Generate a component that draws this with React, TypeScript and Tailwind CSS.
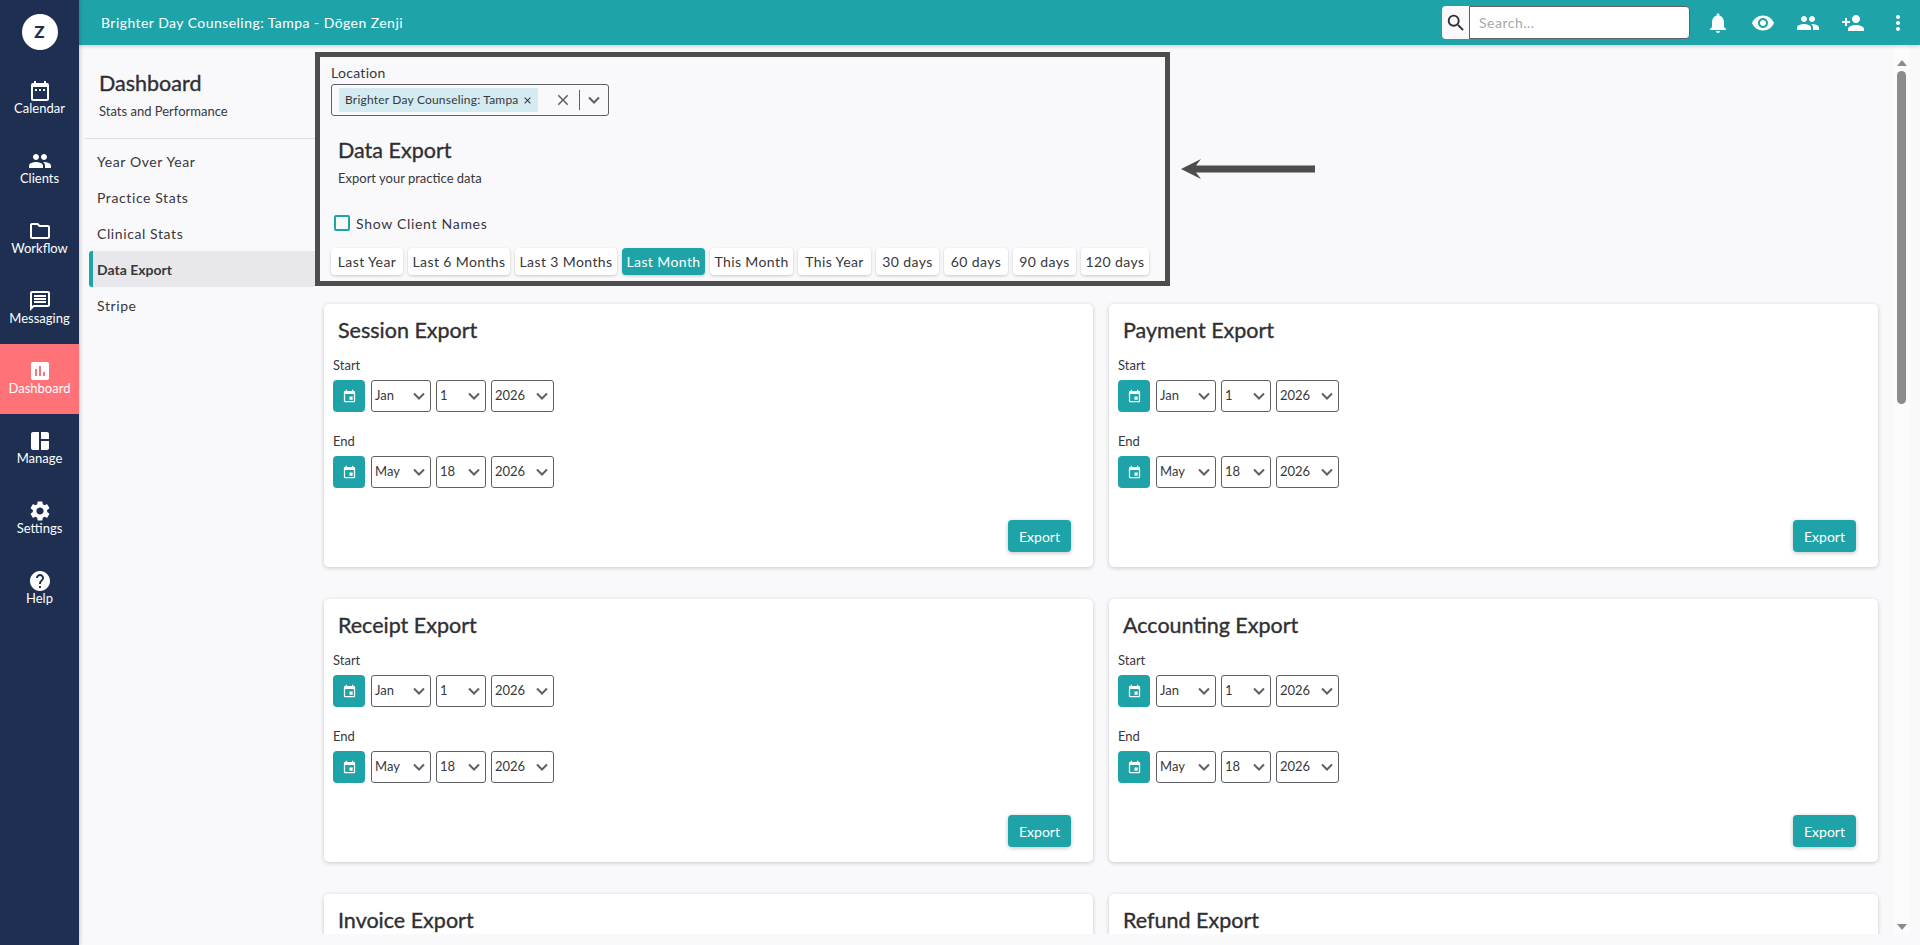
import React from "react";
import {
  MdPeople,
  MdOutlineFolder,
  MdOutlineMessage,
  MdAssessment,
  MdSpaceDashboard,
  MdSettings,
  MdHelp,
  MdNotifications,
  MdVisibility,
  MdPersonAdd,
  MdMoreVert,
  MdSearch,
  MdEvent,
  MdClose,
} from "react-icons/md";

const font = "font-['Lato','Open_Sans',sans-serif]";
const heading = "text-[21.5px] leading-[26px] text-[#2f2f33] [-webkit-text-stroke:0.35px_#2f2f33]";

function CalendarDots() {
  return (
    <svg width="24" height="24" viewBox="0 0 24 24" fill="white">
      <path d="M19 4h-1V2h-2v2H8V2H6v2H5a2 2 0 0 0-2 2v14a2 2 0 0 0 2 2h14a2 2 0 0 0 2-2V6a2 2 0 0 0-2-2zm0 16H5V8h14v12z" />
      <path d="M7 10h2v2H7zM11 10h2v2h-2zM15 10h2v2h-2z" />
    </svg>
  );
}

const sideItems: { label: string; icon: React.ReactNode; active?: boolean }[] = [
  { label: "Calendar", icon: <CalendarDots /> },
  { label: "Clients", icon: <MdPeople size={24} /> },
  { label: "Workflow", icon: <MdOutlineFolder size={24} /> },
  { label: "Messaging", icon: <MdOutlineMessage size={24} /> },
  { label: "Dashboard", icon: <MdAssessment size={24} />, active: true },
  { label: "Manage", icon: <MdSpaceDashboard size={24} /> },
  { label: "Settings", icon: <MdSettings size={24} /> },
  { label: "Help", icon: <MdHelp size={24} /> },
];

function Chevron({ className }: { className: string }) {
  return (
    <svg className={className} width="14" height="14" viewBox="0 0 14 14" fill="none" stroke="#5f5f66" strokeWidth="2">
      <path d="M2 4.5 7 9.5l5-5" />
    </svg>
  );
}

const ranges = [
  { t: "Last Year", w: "w-[72px]" },
  { t: "Last 6 Months", w: "w-[102px]" },
  { t: "Last 3 Months", w: "w-[102px]" },
  { t: "Last Month", w: "w-[83px]", on: true },
  { t: "This Month", w: "w-[83px]" },
  { t: "This Year", w: "w-[73px]" },
  { t: "30 days", w: "w-[63px]" },
  { t: "60 days", w: "w-[64px]" },
  { t: "90 days", w: "w-[63px]" },
  { t: "120 days", w: "w-[68px]" },
];

function DateSelect({ v, w }: { v: string; w: string }) {
  return (
    <div className={`${w} h-[32px] border border-[#5f5f66] rounded-[3px] bg-white flex items-center justify-between pl-[3px] pr-[4px] text-[13px] text-[#37373c]`}>
      <span>{v}</span>
      <Chevron className="shrink-0" />
    </div>
  );
}

function DateRow({ label, m, d, mb }: { label: string; m: string; d: string; mb: string }) {
  return (
    <div className={mb}>
      <div className="text-[13px] leading-[16px] text-[#37373c] mb-[7px]">{label}</div>
      <div className="flex items-center">
        <div className="w-[32px] h-[32px] rounded-[4px] bg-[#1ea4a8] flex items-center justify-center mr-[6px] text-white">
          <MdEvent size={15} />
        </div>
        <div className="flex gap-[5px]">
          <DateSelect v={m} w="w-[60px]" />
          <DateSelect v={d} w="w-[50px]" />
          <DateSelect v="2026" w="w-[63px]" />
        </div>
      </div>
    </div>
  );
}

function Card({ title }: { title: string }) {
  return (
    <div className="h-[263px] bg-white rounded-[5px] shadow-[0_1px_4px_rgba(0,0,0,0.2)] pt-[13px] px-[9px] flex flex-col">
      <h3 className={`pl-[5px] ${heading} mb-[14px]`}>{title}</h3>
      <DateRow label="Start" m="Jan" d="1" mb="mb-[21px]" />
      <DateRow label="End" m="May" d="18" mb="" />
      <div className="mt-[32px] mr-[13px] self-end w-[63px] h-[32px] bg-[#1ea4a8] rounded-[4px] text-white text-[14px] flex items-center justify-center shadow-[0_1px_4px_rgba(0,0,0,0.25)]">
        Export
      </div>
    </div>
  );
}

const topIcons = [MdNotifications, MdVisibility, MdPeople, MdPersonAdd, MdMoreVert];
const navItems = ["Year Over Year", "Practice Stats", "Clinical Stats", "Data Export", "Stripe"];

export default function App() {
  return (
    <div className={`w-[1920px] h-[945px] flex overflow-hidden bg-[#f9f9fb] ${font}`}>
      <aside className="w-[79px] shrink-0 bg-[#1e2f52] text-white flex flex-col shadow-[1px_0_4px_rgba(0,0,0,0.2)] z-20">
        <div className="h-[64px] flex items-center justify-center">
          <div className="w-[36px] h-[36px] rounded-full bg-white flex items-center justify-center text-[#1e2f52] text-[17px] font-black">
            Z
          </div>
        </div>
        {sideItems.map((s) => (
          <div
            key={s.label}
            className={`h-[70px] pb-[3px] flex flex-col items-center justify-center text-[13px] leading-[16px] ${s.active ? "bg-[#ff7378]" : ""}`}
          >
            {s.icon}
            <span className="-mt-[3px]">{s.label}</span>
          </div>
        ))}
      </aside>

      <div className="flex-1 flex flex-col min-w-0">
        <header className="h-[45px] shrink-0 bg-[#1ea4a8] flex items-center justify-between text-white shadow-[0_1px_4px_rgba(0,0,0,0.2)] z-10">
          <div className="pl-[22px] text-[14px] tracking-[0.45px]">Brighter Day Counseling: Tampa - Dōgen Zenji</div>
          <div className="flex items-center">
            <div className="w-[27px] h-[33px] bg-[#f9f9fb] rounded-l-[4px] flex items-center justify-center text-[#2f2f33]">
              <MdSearch size={22} />
            </div>
            <div className="w-[221px] h-[33px] bg-white border border-[#5f5f66] rounded-r-[4px] flex items-center pl-[9px] text-[14px] tracking-[0.5px] text-[#a8a8ac]">
              Search...
            </div>
            <div className="flex ml-[5px]">
              {topIcons.map((I, i) => (
                <div key={i} className="w-[45px] flex justify-center">
                  <I size={24} />
                </div>
              ))}
            </div>
          </div>
        </header>

        <div className="flex-1 flex min-h-0 relative">
          <nav className="w-[236px] shrink-0 pt-[25px]">
            <div className="pl-[20px] h-[69px] ml-[6px] border-b border-[#dcdcde] flex flex-col">
              <h1 className={`-ml-[6px] ${heading}`}>Dashboard</h1>
              <p className="-ml-[6px] mt-[7px] text-[13px] leading-[16px] text-[#37373c]">Stats and Performance</p>
            </div>
            <ul className="mt-[4px] pl-[10px]">
              {navItems.map((n) => {
                const on = n === "Data Export";
                return (
                  <li
                    key={n}
                    className={`h-[36px] flex items-center text-[14px] text-[#37373c] ${on ? "bg-[#e8e8ec] border-l-[4px] border-[#1ea4a8] rounded-l-[3px] pl-[4px] font-bold text-[#2a2a2e]" : "pl-[8px] tracking-[0.6px]"}`}
                  >
                    {n}
                  </li>
                );
              })}
            </ul>
          </nav>

          <div className="flex-1 min-w-0 h-[889px] overflow-hidden pt-[7px]">
            <section className="w-[855px] h-[234px] border-[5px] border-[#4d4d4d] pl-[11px] text-[#37373c]">
              <div className="pt-[7px] text-[14px] leading-[18px] tracking-[0.3px]">Location</div>
              <div className="mt-[2px] w-[278px] h-[32px] border border-[#5f5f66] rounded-[3px] flex items-center pl-[7px] pr-[7px]">
                <div className="w-[199px] h-[24px] bg-[#d4ebf2] rounded-[2px] flex items-center justify-between pl-[6px] pr-[5px] text-[12px] tracking-[0.2px] whitespace-nowrap">
                  <span>Brighter Day Counseling: Tampa</span>
                  <MdClose size={11} className="text-[#2f2f33]" />
                </div>
                <MdClose size={18} className="ml-auto text-[#5f5f66]" />
                <div className="w-px h-[20px] bg-[#5f5f66] mx-[7px]" />
                <Chevron className="" />
              </div>
              <div className="pl-[7px] mt-[21px]">
                <h2 className={heading}>Data Export</h2>
                <p className="mt-[7px] text-[13px] leading-[16px]">Export your practice data</p>
              </div>
              <div className="mt-[29px] flex items-center pl-[3px] text-[14px] tracking-[0.7px] h-[16px]">
                <div className="w-[16px] h-[16px] border-[2px] border-[#1ea4a8] rounded-[2px] mr-[6px]" />
                Show Client Names
              </div>
              <div className="mt-[17px] flex gap-[5px]">
                {ranges.map((r) => (
                  <div
                    key={r.t}
                    className={`${r.w} h-[27px] rounded-[4px] flex items-center justify-center text-[14px] tracking-[0.4px] whitespace-nowrap shadow-[0_1px_3px_rgba(0,0,0,0.2)] ${r.on ? "bg-[#1ea4a8] text-white" : "bg-white text-[#37373c]"}`}
                  >
                    {r.t}
                  </div>
                ))}
              </div>
            </section>

            <div className="mt-[18px] ml-[9px] grid grid-cols-[769px_769px] gap-x-[16px] gap-y-[32px]">
              {["Session Export", "Payment Export", "Receipt Export", "Accounting Export", "Invoice Export", "Refund Export"].map((t) => (
                <Card key={t} title={t} />
              ))}
            </div>
          </div>

          <div className="w-[26px] shrink-0 h-[889px] flex">
            <div className="w-[15px] h-full bg-[#fcfcfd] flex flex-col items-center pt-[15px]">
              <div className="w-0 h-0 border-l-[5px] border-r-[5px] border-b-[6px] border-l-transparent border-r-transparent border-b-[#8c8c8c]" />
              <div className="mt-[5px] w-[9px] h-[333px] rounded-full bg-[#8c8c8c]" />
              <div className="mt-auto mb-[4px] w-0 h-0 border-l-[5px] border-r-[5px] border-t-[6px] border-l-transparent border-r-transparent border-t-[#8c8c8c]" />
            </div>
          </div>

          <div className="absolute left-[1102px] top-[114px] flex items-center">
            <svg width="134" height="20" viewBox="0 0 134 20" fill="#4d4d4d">
              <path d="M0 10 20 0 15 6.5H134V13.5H15L20 20Z" />
            </svg>
          </div>
        </div>
      </div>
    </div>
  );
}
